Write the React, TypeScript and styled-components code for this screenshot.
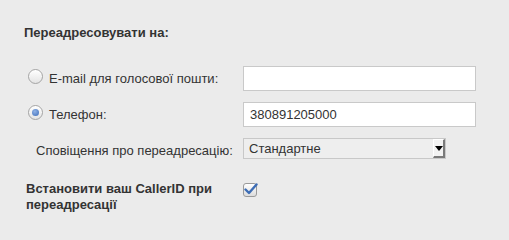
import React from 'react'
import styled, { createGlobalStyle } from 'styled-components'

const GlobalStyle = createGlobalStyle`
    html, body {
        margin: 0;
        padding: 0;
        background: #ebebeb;
    }
    body {
        font-family: "Liberation Sans", Arial, sans-serif;
        font-size: 13px;
        color: #333333;
    }
`;

const App = () => {
    return (
        <>
            <GlobalStyle />
            <Panel>
                <Title>Переадресовувати на:</Title>
                <Form>
                    <RadioLabel>
                        <Radio />
                        E-mail для голосової пошти:
                    </RadioLabel>
                    <TextInput value="" readOnly />

                    <RadioLabel>
                        <Radio $checked />
                        Телефон:
                    </RadioLabel>
                    <TextInput value="380891205000" readOnly />

                    <SubLabel>Сповіщення про переадресацію:</SubLabel>
                    <Select>
                        <span>Стандартне</span>
                        <SelectArrow />
                    </Select>
                </Form>
                <CallerRow>
                    <BoldLabel>Встановити ваш CallerID при переадресації</BoldLabel>
                    <Checkbox>
                        <svg width="14" height="12" viewBox="0 0 14 12">
                            <path d="M1.5 6.5 L5 10 L12.5 1.5" fill="none" stroke="#3d6db5" strokeWidth="2.4" strokeLinecap="round" strokeLinejoin="round" />
                        </svg>
                    </Checkbox>
                </CallerRow>
            </Panel>
        </>
    )
}

const Panel = styled.div`
    padding: 26px 0 0 24px;
    width: 485px;
    height: 199px;
    overflow: hidden;
`;

const Title = styled.h2`
    margin: 0 0 27px 0;
    font-size: 13px;
    font-weight: bold;
    line-height: 13px;
    color: #333333;
`;

const Form = styled.div`
    display: grid;
    grid-template-columns: 219px 233px;
    row-gap: 11px;
    align-items: center;
`;

const RadioLabel = styled.label`
    display: flex;
    align-items: center;
    gap: 6px;
    padding-left: 4px;
    line-height: 16px;
    color: #333333;
`;

const Radio = styled.span<{ $checked?: boolean }>`
    position: relative;
    top: -2px;
    width: 13px;
    height: 13px;
    border-radius: 50%;
    border: 1px solid #a4a4a4;
    background: linear-gradient(#ffffff, #e4e4e4);
    box-shadow: inset 0 1px 1px rgba(255, 255, 255, 0.9);
    flex-shrink: 0;
    &::after {
        content: '';
        display: ${p => (p.$checked ? 'block' : 'none')};
        position: absolute;
        left: 3px;
        top: 3px;
        width: 7px;
        height: 7px;
        border-radius: 50%;
        background: radial-gradient(circle at 40% 35%, #8fb2e6, #3d6cb8);
    }
`;

const TextInput = styled.input`
    box-sizing: border-box;
    width: 233px;
    height: 25px;
    margin: 0;
    padding: 0 6px;
    border: 1px solid #c9c9c9;
    background: #ffffff;
    font-family: "Liberation Sans", Arial, sans-serif;
    font-size: 13px;
    color: #333333;
    outline: none;
`;

const SubLabel = styled.span`
    padding-left: 12px;
    padding-top: 3px;
    color: #333333;
`;

const Select = styled.div`
    box-sizing: border-box;
    width: 203px;
    height: 21px;
    display: flex;
    align-items: center;
    justify-content: space-between;
    padding-left: 5px;
    border: 1px solid #c8c8c8;
    background: #eeeeee;
    color: #333333;
`;

const SelectArrow = styled.span`
    position: relative;
    width: 12px;
    height: 19px;
    box-sizing: border-box;
    background: #f2f2f2;
    border-right: 2px solid #7a7a7a;
    border-bottom: 2px solid #7a7a7a;
    border-left: 1px solid #ffffff;
    border-top: 1px solid #ffffff;
    &::after {
        content: '';
        position: absolute;
        left: 1px;
        top: 6px;
        border-left: 4px solid transparent;
        border-right: 4px solid transparent;
        border-top: 5px solid #000000;
    }
`;

const CallerRow = styled.div`
    display: grid;
    grid-template-columns: 217px auto;
    align-items: start;
    margin-top: 22px;
    padding-left: 2px;
`;

const BoldLabel = styled.span`
    font-weight: bold;
    line-height: 16px;
    color: #333333;
    width: 200px;
`;

const Checkbox = styled.span`
    position: relative;
    box-sizing: border-box;
    width: 14px;
    height: 14px;
    margin-top: 2px;
    border: 1px solid #9a9a9a;
    border-radius: 3px;
    background: linear-gradient(#ffffff, #dcdcdc);
    svg {
        position: absolute;
        left: 0;
        top: -1px;
    }
`;

export default App
